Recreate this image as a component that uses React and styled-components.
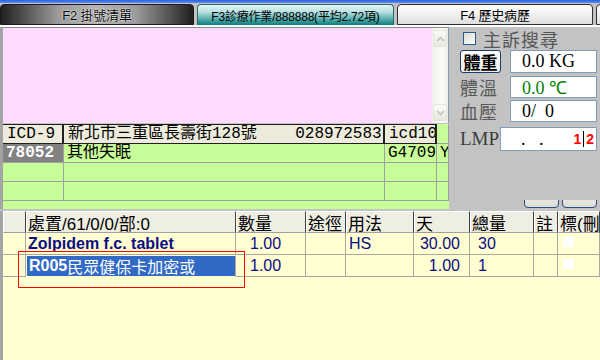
import React from "react"
import styled, { createGlobalStyle, css } from "styled-components"

const GlobalStyle = createGlobalStyle`
  html, body {
    margin: 0;
    padding: 0;
    background: #c3c3c3;
  }
  body {
    font-family: "Liberation Sans", "Noto Sans CJK TC", sans-serif;
  }
`

const Screen = styled.div`
  width: 600px;
  height: 360px;
  overflow: hidden;
  background: #c3c3c3;
  display: flex;
  flex-direction: column;
`

const TopLine = styled.div`
  height: 3px;
  background: linear-gradient(#2a62e2, #5a8ef0);
`

//tabs
const TabStrip = styled.div`
  height: 22px;
  display: flex;
  align-items: flex-end;
  gap: 3px;
  border-bottom: 2px solid #ffffff;
`

const Tab = styled.div`
  box-sizing: border-box;
  flex: 0 0 ${p => p.$w}px;
  height: 21px;
  display: flex;
  align-items: center;
  justify-content: center;
  font-size: 12px;
  letter-spacing: -0.2px;
  color: #000;
  white-space: nowrap;
  overflow: hidden;
  border-radius: 4px 4px 0 0;
  ${p =>
    p.$kind === "dark" &&
    css`
      background: linear-gradient(to right, #202020, #9c9c9c 30%, #b4b4b4 50%, #9c9c9c 70%, #202020);
      border: 1px solid #1a1a1a;
      text-shadow: 0 0 2px #fff, 0 0 1px #fff;
      font-size: 13px;
    `}
  ${p =>
    p.$kind === "active" &&
    css`
      background: linear-gradient(#e6f4f4, #b8e0e0 35%, #4aa6a6 75%, #0b7c7c);
      border: 1px solid #2a6a6a;
      border-bottom: none;
    `}
  ${p =>
    p.$kind === "plain" &&
    css`
      background: linear-gradient(#ffffff, #f4f4f4 40%, #dedede);
      border: 1px solid #303030;
      font-size: 13px;
    `}
`

//upper area
const Upper = styled.div`
  height: 182px;
  display: flex;
`

const LeftCol = styled.div`
  width: 449px;
  border-left: 3px solid #a4a4a4;
  display: flex;
  flex-direction: column;
  gap: 1px;
`

const Memo = styled.div`
  height: 95px;
  display: flex;
  background: #ffdcff;
  border-top: 1px solid #8a8a8a;
  border-right: 1px solid #7f9db9;
`

const MemoText = styled.div`
  flex: 1;
`

const ScrollBar = styled.div`
  width: 16px;
  display: flex;
  flex-direction: column;
  justify-content: space-between;
  padding: 2px 0;
  background: linear-gradient(to right, #f1f1ec, #fbfbf8 60%, #eeeee8);
`

const ScrollBtn = styled.div`
  height: 15px;
  margin: 0 1px;
  border-radius: 2px;
  background: linear-gradient(#fbfbf8, #e8e8e1);
  border: 1px solid #e4e4dc;
  display: flex;
  align-items: center;
  justify-content: center;
`

const IcdTable = styled.div`
  flex: 1;
  background: #c8fe9a;
  font-family: "Liberation Mono", "Noto Sans CJK TC", monospace;
  font-size: 16px;
`

const IcdRow = styled.div`
  display: grid;
  grid-template-columns: 61px 321px 52px 1fr;
  height: ${p => (p.$head ? 20 : 19)}px;
`

const IcdCell = styled.div`
  box-sizing: border-box;
  padding-left: 3px;
  line-height: 18px;
  white-space: pre;
  overflow: hidden;
  border-right: 1px solid #a0a0a0;
  border-bottom: 1px solid #a0a0a0;
  ${p =>
    p.$head &&
    css`
      background: #ecebdc;
      border-top: 1px solid #202020;
      border-right: 2px solid #202020;
      border-bottom: 1px solid #202020;
      padding-left: 4px;
    `}
  ${p =>
    p.$code &&
    css`
      background: #828282;
      color: #fff;
      font-weight: bold;
    `}
`

//vitals
const Vitals = styled.div`
  flex: 1;
  display: flex;
  flex-direction: column;
  padding: 2px 3px 0 10px;
`

const SearchRow = styled.label`
  display: flex;
  align-items: center;
  height: 19px;
  padding-left: 4px;
  gap: 7px;
  color: #555;
  font-size: 18px;
  letter-spacing: 1px;
  margin-bottom: 1px;
`

const Check = styled.span`
  box-sizing: border-box;
  width: 13px;
  height: 13px;
  background: linear-gradient(135deg, #dcdcd6, #ffffff);
  border: 1px solid #2a5a8a;
`

const VitalRow = styled.div`
  display: flex;
  align-items: center;
  justify-content: space-between;
  height: ${p => p.$h}px;
  margin-top: ${p => p.$gap}px;
`

const WeightBtn = styled.button`
  box-sizing: border-box;
  width: 41px;
  height: 23px;
  padding: 0;
  margin-left: 1px;
  border: 1px solid #1c3c6a;
  border-radius: 3px;
  background: linear-gradient(#ffffff, #ecebe4);
  font-family: "Noto Sans CJK TC", sans-serif;
  font-size: 17px;
  font-weight: bold;
  line-height: 20px;
  color: #000;
`

const Label = styled.span`
  width: 40px;
  padding-left: 1px;
  color: #5a5a5a;
  font-size: 18px;
  letter-spacing: 1px;
  ${p =>
    p.$latin &&
    css`
      font-family: "Liberation Serif", serif;
      font-size: 19px;
      letter-spacing: 0;
      color: #3c3c3c;
    `}
`

const Field = styled.div`
  box-sizing: border-box;
  width: ${p => p.$w}px;
  height: 100%;
  background: #fff;
  border: 1px solid #7f9db9;
  display: flex;
  align-items: center;
  padding-left: 11px;
  font-family: "Liberation Serif", serif;
  font-size: 18px;
  color: ${p => p.$color || "#000"};
  white-space: pre;
`

const Spin = styled.span`
  margin-left: auto;
  margin-right: 2px;
  display: flex;
  align-items: center;
  font-family: "Liberation Sans", sans-serif;
  font-weight: bold;
  font-size: 14px;
  color: #ff0000;
`

const Caret = styled.span`
  width: 1px;
  height: 16px;
  margin: 0 2px;
  background: #000;
`

const ButtonPeek = styled.div`
  margin-top: auto;
  height: 8px;
  overflow: hidden;
  display: flex;
  align-items: flex-end;
  justify-content: flex-end;
  gap: 3px;
  margin-bottom: 1px;
`

const PeekBtn = styled.div`
  box-sizing: border-box;
  width: 35px;
  height: 20px;
  border: 1px solid #2a4c7e;
  border-radius: 4px;
  background: linear-gradient(#f6f6f2, #dcdcd4);
`

//orders
const Orders = styled.div`
  flex: 1;
  margin-top: 2px;
  border-left: 3px solid #a4a4a4;
  background: #ffffd2;
  position: relative;
`

const OrderRow = styled.div`
  display: grid;
  grid-template-columns: 23px 210px 70px 40px 68px 56px 64px 24px 1fr;
  height: 22px;
`

const OrderCell = styled.div`
  box-sizing: border-box;
  border-right: 1px solid #a8a8a0;
  border-bottom: 1px solid #a8a8a0;
  white-space: nowrap;
  overflow: hidden;
  display: flex;
  align-items: center;
  padding-left: ${p => p.$pl || 2}px;
  justify-content: ${p => (p.$right ? "flex-end" : "flex-start")};
  padding-right: ${p => p.$pr || 0}px;
  font-size: 16px;
  color: #0c0c84;
  ${p =>
    p.$head &&
    css`
      background: #efeee2;
      color: #000;
      font-size: 17px;
      border-left: 1px solid #fff;
      border-right: 1px solid #404040;
      border-top: 1px solid #fff;
      border-bottom: 1px solid #a0a0a0;
      padding-left: 1px;
    `}
  ${p =>
    p.$bold &&
    css`
      font-weight: bold;
    `}
  ${p =>
    p.$sel &&
    css`
      background: #316ac5;
      color: #fff;
      border: 1px solid #ffffd2;
      border-right: 1px solid #a8a8a0;
    `}
`

const Sel = styled.span`
  font-weight: bold;
`

const CheckMark = styled.span`
  width: 11px;
  height: 10px;
  background: #fff;
  margin-left: 3px;
  margin-top: -4px;
`

const Highlight = styled.div`
  position: absolute;
  left: 15px;
  top: 40px;
  width: 225px;
  height: 35px;
  border: 1px solid #ff0000;
  pointer-events: none;
`

const Chevron = ({ up }) => (
  <svg width="9" height="6" viewBox="0 0 9 6">
    <path
      d={up ? "M1 5 L4.5 1.5 L8 5" : "M1 1 L4.5 4.5 L8 1"}
      fill="none"
      stroke="#c4c4bc"
      strokeWidth="1.6"
    />
  </svg>
)

const icdRows = [
  ["78052", "其他失眠", "G4709", "Y"],
  ["", "", "", ""],
  ["", "", "", ""],
]

const orders = [
  { name: "Zolpidem f.c. tablet", qty: "1.00", route: "", usage: "HS", days: "30.00", total: "30" },
  { name: "民眾健保卡加密或", code: "R005", qty: "1.00", route: "", usage: "", days: "1.00", total: "1", selected: true },
]

const App = () => {
  return (
    <Screen>
      <GlobalStyle />
      <TopLine />
      <TabStrip>
        <Tab $w={194} $kind='dark'>F2 掛號清單</Tab>
        <Tab $w={197} $kind='active'>F3診療作業/888888(平均2.72項)</Tab>
        <Tab $w={196} $kind='plain'>F4 歷史病歷</Tab>
        <Tab $w={10} $kind='plain' />
      </TabStrip>

      <Upper>
        <LeftCol>
          <Memo>
            <MemoText />
            <ScrollBar>
              <ScrollBtn><Chevron up /></ScrollBtn>
              <ScrollBtn><Chevron /></ScrollBtn>
            </ScrollBar>
          </Memo>
          <IcdTable>
            <IcdRow $head>
              <IcdCell $head>ICD-9</IcdCell>
              <IcdCell $head>新北市三重區長壽街128號    028972583</IcdCell>
              <IcdCell $head>icd10</IcdCell>
              <IcdCell />
            </IcdRow>
            {icdRows.map((r, i) => (
              <IcdRow key={i}>
                <IcdCell $code={i === 0}>{r[0]}</IcdCell>
                <IcdCell>{r[1]}</IcdCell>
                <IcdCell>{r[2]}</IcdCell>
                <IcdCell>{r[3]}</IcdCell>
              </IcdRow>
            ))}
          </IcdTable>
        </LeftCol>

        <Vitals>
          <SearchRow>
            <Check />
            主訴搜尋
          </SearchRow>
          <VitalRow $h={23} $gap={1}>
            <WeightBtn>體重</WeightBtn>
            <Field $w={87}>0.0 KG</Field>
          </VitalRow>
          <VitalRow $h={22} $gap={3}>
            <Label>體溫</Label>
            <Field $w={87} $color='#008000'>0.0 ℃</Field>
          </VitalRow>
          <VitalRow $h={22} $gap={2}>
            <Label>血壓</Label>
            <Field $w={87}>0/  0</Field>
          </VitalRow>
          <VitalRow $h={24} $gap={5}>
            <Label $latin>LMP</Label>
            <Field $w={97}>
              {"  .   ."}
              <Spin>1<Caret />2</Spin>
            </Field>
          </VitalRow>
          <ButtonPeek>
            <PeekBtn />
            <PeekBtn />
          </ButtonPeek>
        </Vitals>
      </Upper>

      <Orders>
        <OrderRow>
          <OrderCell $head />
          <OrderCell $head>處置/61/0/0/部:0</OrderCell>
          <OrderCell $head>數量</OrderCell>
          <OrderCell $head>途徑</OrderCell>
          <OrderCell $head>用法</OrderCell>
          <OrderCell $head>天</OrderCell>
          <OrderCell $head>總量</OrderCell>
          <OrderCell $head>註</OrderCell>
          <OrderCell $head>標(刪</OrderCell>
        </OrderRow>
        {orders.map((o, i) => (
          <OrderRow key={i}>
            <OrderCell />
            <OrderCell $bold={!o.selected} $sel={o.selected}>
              {o.code && <Sel>{o.code}</Sel>}
              {o.name}
            </OrderCell>
            <OrderCell $pl={14}>{o.qty}</OrderCell>
            <OrderCell>{o.route}</OrderCell>
            <OrderCell $pl={3}>{o.usage}</OrderCell>
            <OrderCell $right $pr={9}>{o.days}</OrderCell>
            <OrderCell $pl={8}>{o.total}</OrderCell>
            <OrderCell />
            <OrderCell><CheckMark /></OrderCell>
          </OrderRow>
        ))}
        <Highlight />
      </Orders>
    </Screen>
  )
}

export default App
